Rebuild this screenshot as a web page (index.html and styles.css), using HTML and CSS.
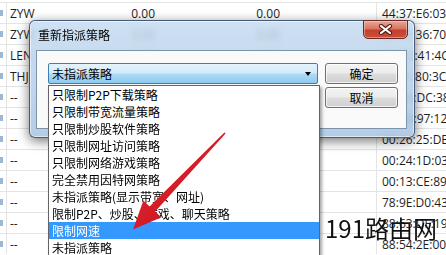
FILE: index.html
```html
<!doctype html>
<html>
<head>
<meta charset="utf-8">
<title>重新指派策略</title>
<link rel="stylesheet" href="styles.css">
</head>

<body>
<table class="grid">
	<tr><td class="ico"><i></i></td><td class="name">ZYW</td><td class="num">0.00</td><td class="num wide">0.00</td><td class="gap"></td><td class="mac">44:37:E6:03</td></tr>
	<tr><td class="ico"><i></i></td><td class="name">ZYW</td><td class="num">0.00</td><td class="num wide">0.00</td><td class="gap"></td><td class="mac">00:1E:36:70</td></tr>
	<tr><td class="ico"><i></i></td><td class="name">LEN</td><td class="num">0.00</td><td class="num wide">0.00</td><td class="gap"></td><td class="mac">28:D2:41:4C</td></tr>
	<tr><td class="ico"><i></i></td><td class="name">THJ</td><td class="num">0.00</td><td class="num wide">0.00</td><td class="gap"></td><td class="mac">00:F1:80:3C</td></tr>
	<tr><td class="ico"><i></i></td><td class="name">--</td><td class="num"></td><td class="num wide"></td><td class="gap"></td><td class="mac">00:0A:DC:38</td></tr>
	<tr><td class="ico"><i></i></td><td class="name">--</td><td class="num"></td><td class="num wide"></td><td class="gap"></td><td class="mac">00:6B:97:12</td></tr>
	<tr><td class="ico"><i></i></td><td class="name">--</td><td class="num"></td><td class="num wide"></td><td class="gap"></td><td class="mac">00:26:25:DE</td></tr>
	<tr><td class="ico"><i></i></td><td class="name">--</td><td class="num"></td><td class="num wide"></td><td class="gap"></td><td class="mac">00:24:1D:03</td></tr>
	<tr><td class="ico"><i></i></td><td class="name">--</td><td class="num"></td><td class="num wide"></td><td class="gap"></td><td class="mac">00:13:CE:89</td></tr>
	<tr><td class="ico"><i></i></td><td class="name">--</td><td class="num"></td><td class="num wide"></td><td class="gap"></td><td class="mac">78:9E:D0:43</td></tr>
	<tr><td class="ico"><i></i></td><td class="name">--</td><td class="num"></td><td class="num wide"></td><td class="gap"></td><td class="mac">88:63:DF:19</td></tr>
	<tr><td class="ico"><i></i></td><td class="name">--</td><td class="num"></td><td class="num wide"></td><td class="gap"></td><td class="mac">88:54:2E:00</td></tr>
</table>

<div class="dialog">
	<div class="title-bar">
		<span class="title">重新指派策略</span>
		<button class="close">
			<svg width="15" height="11" viewBox="0 0 15 11">
				<path d="M3 2 L12 9 M12 2 L3 9" stroke="#5a1a14" stroke-width="4.2" stroke-linecap="round"/>
				<path d="M3 2 L12 9 M12 2 L3 9" stroke="#fff" stroke-width="2.2" stroke-linecap="round"/>
			</svg>
		</button>
	</div>
	<div class="client">
		<div class="combo-wrap">
			<div class="combo">
				<span>未指派策略</span>
				<i class="caret"></i>
			</div>
			<ul class="combo-list">
				<li>只限制P2P下载策略</li>
				<li>只限制带宽流量策略</li>
				<li>只限制炒股软件策略</li>
				<li>只限制网址访问策略</li>
				<li>只限制网络游戏策略</li>
				<li>完全禁用因特网策略</li>
				<li>未指派策略(显示带宽、网址)</li>
				<li>限制P2P、炒股、游戏、聊天策略</li>
				<li class="active">限制网速</li>
				<li>未指派策略</li>
			</ul>
		</div>
		<div class="btns">
			<button class="btn">确定</button>
			<button class="btn">取消</button>
		</div>
	</div>
</div>

<!-- 红色箭头 -->
<svg class="arrow" width="446" height="255" viewBox="0 0 446 255">
	<defs>
		<linearGradient id="red" x1="0" y1="0" x2="1" y2="1">
			<stop offset="0" stop-color="#e8323a"/>
			<stop offset="1" stop-color="#c00812"/>
		</linearGradient>
	</defs>
	<polygon points="224.4,132.6 149.6,206.6 143.4,200.4 133,229.5 161.4,217.2 155.2,211.4 225.6,133.4" fill="url(#red)"/>
</svg>

<div class="mark">191路由网</div>
</body>
</html>
```

FILE: styles.css
```css
html, body{
	margin: 0;
	width: 446px;
	height: 255px;
	overflow: hidden;
	background: #fff;
}
body{
	position: relative;
	font-family: "Noto Sans CJK SC", "Noto Sans", sans-serif;
}

/* 背景列表 */
.grid{
	margin-top: 2px;
	border-collapse: collapse;
	table-layout: fixed;
	width: 470px;
	font-family: "Open Sans", "Liberation Sans", sans-serif;
	font-size: 12px;
	color: #1e1e1e;
}
.grid td{
	height: 20px;
	padding: 0;
	border-top: 1px solid #e4e4e4;
	white-space: nowrap;
	overflow: hidden;
}
.grid .ico{
	width: 6px;
	border-right: 1px solid #e4e4e4;
}
.grid .ico i{
	display: block;
	width: 3px;
	height: 6px;
	background: #9db8d6;
}
.grid .name{
	width: 87px;
	padding-left: 3px;
}
.grid .num{
	width: 58px;
	padding-right: 2px;
	text-align: right;
}
.grid .wide{
	width: 123px;
	padding-right: 3px;
}
.grid .gap{
	width: 93px;
}
.grid .mac{
	width: 89px;
	padding-left: 5px;
	border-left: 1px solid #e4e4e4;
}

/* 对话框 */
.dialog{
	position: absolute;
	left: 29px;
	top: 20px;
	width: 386px;
	height: 118px;
	box-sizing: border-box;
	border: 1px solid rgba(40, 60, 90, 0.8);
	border-radius: 6px;
	background: linear-gradient(rgba(196, 218, 240, 0.82), rgba(168, 196, 226, 0.86));
	backdrop-filter: blur(3px);
	box-shadow: 0 3px 12px rgba(0, 0, 0, 0.55), inset 0 0 0 1px rgba(255, 255, 255, 0.55);
}
.title-bar{
	position: relative;
	height: 29px;
	display: flex;
	align-items: center;
	padding-left: 8px;
}
.title{
	font-size: 12px;
	color: #000;
	margin-top: -2px;
}
.close{
	position: absolute;
	left: 333px;
	top: -1px;
	width: 45px;
	height: 19px;
	padding: 0;
	border: 1px solid #6b2822;
	border-radius: 0 0 5px 5px;
	background: linear-gradient(#eaa697 0%, #d9755f 45%, #c4402c 55%, #c8503a 100%);
	box-shadow: inset 0 0 0 1px rgba(255, 220, 210, 0.45);
	display: flex;
	align-items: center;
	justify-content: center;
}
.client{
	display: flex;
	gap: 7px;
	height: 79px;
	margin: 0 7px 0 6px;
	padding: 12px 8px 0 11px;
	box-sizing: border-box;
	border: 1px solid #7d94ad;
	background: #fafafa;
}

/* 下拉框 */
.combo-wrap{
	position: relative;
	width: 270px;
}
.combo{
	height: 21px;
	box-sizing: border-box;
	border: 1px solid #3c7fb1;
	border-radius: 2px;
	background: linear-gradient(#e6f3fc 0%, #d2eafa 45%, #aedaf5 55%, #8ccaef 100%);
	display: flex;
	align-items: center;
	justify-content: space-between;
	padding: 0 6px 0 3px;
	font-size: 12px;
	color: #000;
}
.caret{
	width: 0;
	height: 0;
	border-left: 3.5px solid transparent;
	border-right: 3.5px solid transparent;
	border-top: 4px solid #000;
	margin-top: 1px;
}
.combo-list{
	position: absolute;
	left: 0;
	top: 22px;
	width: 272px;
	height: 200px;
	margin: 0;
	padding: 0;
	list-style: none;
	box-sizing: border-box;
	border: 1px solid #646464;
	background: #fff;
	box-shadow: 2px 2px 3px rgba(0, 0, 0, 0.35);
	z-index: 2;
}
.combo-list li{
	height: 17px;
	line-height: 17px;
	padding-left: 3px;
	font-size: 12px;
	color: #000;
	white-space: nowrap;
	overflow: hidden;
}
.combo-list .active{
	background: #3399ff;
	color: #fff;
}

/* 按钮 */
.btns{
	display: flex;
	flex-direction: column;
	gap: 3px;
}
.btn{
	width: 73px;
	height: 21px;
	padding: 0;
	border: 1px solid #707070;
	border-radius: 3px;
	background: linear-gradient(#f4f4f4 0%, #ebebeb 48%, #dddddd 52%, #cfcfcf 100%);
	box-shadow: inset 0 0 0 1px rgba(255, 255, 255, 0.7);
	font-family: "Noto Sans CJK SC", sans-serif;
	font-size: 12px;
	color: #000;
}

.arrow{
	position: absolute;
	left: 0;
	top: 0;
	pointer-events: none;
	z-index: 3;
}
.mark{
	position: absolute;
	left: 325px;
	top: 214px;
	font-family: "Noto Sans CJK SC", sans-serif;
	font-size: 24px;
	line-height: 1.2;
	color: #111;
	z-index: 4;
}
```
